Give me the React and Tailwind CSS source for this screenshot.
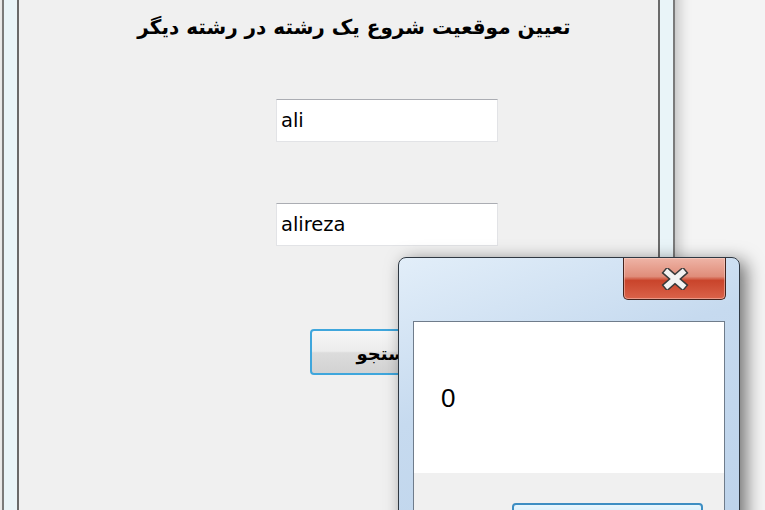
import React from "react";

function CloseX() {
  return (
    <svg width="28" height="22" viewBox="0 0 28 22">
      <line x1="6.5" y1="4.5" x2="21.5" y2="17.5" stroke="#3a3a3a" strokeWidth="8.5" strokeLinecap="square" />
      <line x1="21.5" y1="4.5" x2="6.5" y2="17.5" stroke="#3a3a3a" strokeWidth="8.5" strokeLinecap="square" />
      <line x1="6.5" y1="4.5" x2="21.5" y2="17.5" stroke="#f2f2f2" strokeWidth="5.5" strokeLinecap="square" />
      <line x1="21.5" y1="4.5" x2="6.5" y2="17.5" stroke="#f2f2f2" strokeWidth="5.5" strokeLinecap="square" />
    </svg>
  );
}

export default function App() {
  return (
    <div className="relative w-[765px] h-[510px] overflow-hidden bg-[#f4f4f4]">
      {/* main window */}
      <div className="absolute left-[2px] top-[-40px] w-[673px] h-[600px] border-2 border-[#7a7a7a] bg-[#e9f4f8] px-[13px] pt-[36px] shadow-[4px_0_12px_rgba(0,0,0,0.22)]">
        <div className="h-full border-2 border-[#6a6a6a] bg-[#f0f0f0] flex flex-col items-start">
          <div
            dir="rtl"
            className="mt-[13px] ml-[105px] w-[460px] text-center leading-[28px] text-[20px] font-bold text-black whitespace-nowrap"
            style={{ fontFamily: '"DejaVu Sans", sans-serif' }}
          >
            تعیین موقعیت شروع یک رشته در رشته دیگر
          </div>
          <div
            className="mt-[58px] ml-[257px] w-[222px] h-[43px] bg-white border border-[#e2e3e6] border-t-[#abadb3] flex items-center pl-[4px] text-[19.5px] text-black"
            style={{ fontFamily: '"DejaVu Sans", sans-serif' }}
          >
            ali
          </div>
          <div
            className="mt-[61px] ml-[257px] w-[222px] h-[43px] bg-white border border-[#e2e3e6] border-t-[#abadb3] flex items-center pl-[4px] text-[19.5px] text-black"
            style={{ fontFamily: '"DejaVu Sans", sans-serif' }}
          >
            alireza
          </div>
          <div
            dir="rtl"
            className="mt-[83px] ml-[291px] w-[156px] h-[46px] rounded-[4px] border-2 border-[#3fa6dc] bg-[linear-gradient(#f6f6f6_0%,#ececec_48%,#dcdcdc_52%,#d2d2d2_100%)] flex items-center justify-center pt-[3px] text-[18px] font-bold text-black"
            style={{ fontFamily: '"DejaVu Sans", sans-serif' }}
          >
            جستجو
          </div>
        </div>
      </div>

      {/* message box */}
      <div className="absolute left-[398px] top-[257px] w-[342px] h-[300px] rounded-t-[8px] border border-[#2f3842] bg-[linear-gradient(160deg,#e2eef9_0%,#c6daef_40%,#bcd2ea_100%)] shadow-[6px_4px_18px_rgba(0,0,0,0.55)] px-[14px] pt-[63px]">
        <div className="absolute right-[13px] top-0 w-[103px] h-[42px] rounded-b-[5px] border border-t-0 border-[#43231d] bg-[linear-gradient(#eeb4a6_0%,#e08d7a_45%,#c9442b_55%,#d9634a_100%)] shadow-[inset_0_0_0_1px_rgba(255,220,210,0.45)] flex items-center justify-center">
          <CloseX />
        </div>
        <div className="h-full border border-[#6f7c8b] flex flex-col">
          <div className="h-[151px] bg-white flex items-start pl-[27px] pt-[63px]">
            <span
              className="text-[26px] leading-[26px] text-black"
              style={{ fontFamily: '"Liberation Sans", sans-serif' }}
            >
              0
            </span>
          </div>
          <div className="flex-1 bg-[#f0f0f0] pt-[30px] pl-[98px]">
            <div className="w-[191px] h-[40px] rounded-[4px] border-2 border-[#3d8ec3] bg-[linear-gradient(#e8f6fd_0%,#c4e6f8_50%,#a9daf4_100%)]" />
          </div>
        </div>
      </div>
    </div>
  );
}
